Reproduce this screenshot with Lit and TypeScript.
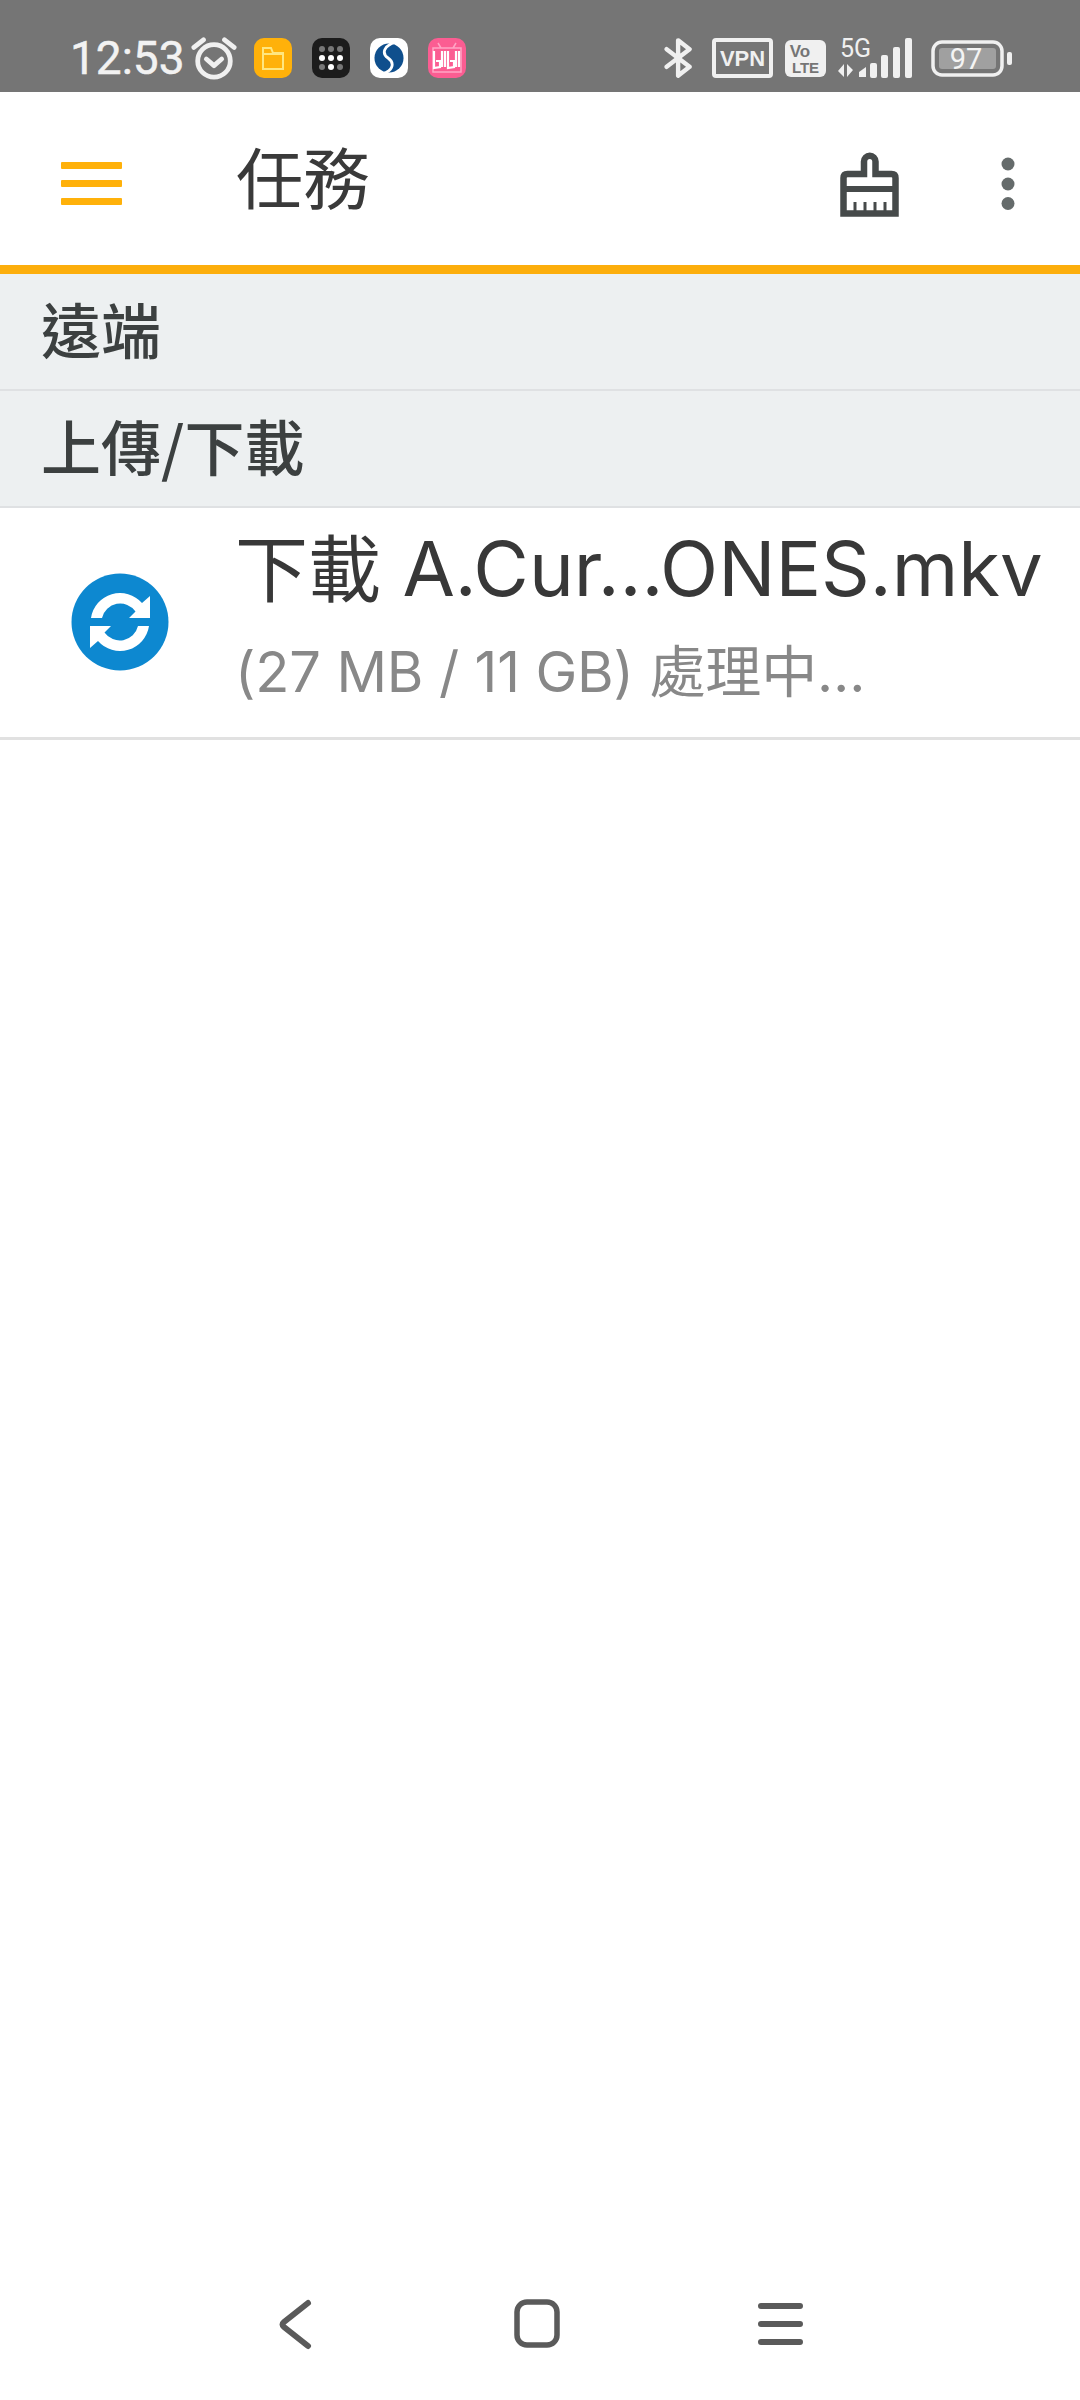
import { LitElement, html, css, svg } from "lit";
import { customElement } from "lit/decorators.js";

@customElement("app-root")
export class AppRoot extends LitElement {
  static styles = css`
    :host { display: block; width: 1080px; height: 2400px; background: #fff; font-family: Inter, "Noto Sans CJK TC", sans-serif; overflow: hidden; }
    .page { display: flex; flex-direction: column; height: 2400px; }
    .status { height: 92px; background: #757575; display: flex; align-items: center; padding: 24px 0 0 70px; box-sizing: border-box; color: #f2f2f2; flex: none; }
    .time { font-size: 46px; line-height: 46px; width: 121px; font-family: Roboto, "Noto Sans", sans-serif; flex: none; -webkit-text-stroke: 0.5px #f2f2f2; }
    .status svg { display: block; flex: none; }
    .app { width: 38px; height: 40px; border-radius: 10px; margin-right: 20px; display: flex; align-items: center; justify-content: center; flex: none; }
    .alarm { margin-right: 17px; }
    .app.last { margin-right: 0; }
    .bt { margin-left: 198px; }
    .vpn { margin-left: 18px; }
    .volte { margin-left: 12px; }
    .signal { margin-left: 11px; }
    .battery { margin-left: 17px; }
    .toolbar { height: 173px; display: flex; align-items: center; flex: none; }
    .menu { margin-left: 61px; width: 61px; display: flex; flex-direction: column; gap: 11px; margin-top: 10px; flex: none; }
    .menu i { display: block; height: 7px; background: #ffb10a; border-radius: 1px; }
    .title { margin-left: 114px; font-size: 67px; line-height: 1; color: #3a3a3a; font-family: "Noto Sans CJK TC", sans-serif; flex: 1; margin-top: -8px; }
    .broom { margin-right: 102px; margin-top: 12px; }
    .dots { margin-right: 65px; margin-top: 11px; }
    .rule { height: 9px; background: #fcae0c; flex: none; }
    .sec { height: 107px; padding-bottom: 8px; background: #edf0f1; border-bottom: 2px solid #dfe1e3; display: flex; align-items: center; padding-left: 41px; font-size: 60px; color: #3c4040; flex: none; font-weight: 500; font-family: "Noto Sans CJK TC", sans-serif; }
    .row { height: 229px; border-bottom: 3px solid #e1e1e1; display: flex; flex: none; align-items: center; }
    .ico { margin-left: 71px; flex: none; margin-top: -1px; }
    .text { margin-left: 66px; padding-bottom: 12px; display: flex; flex-direction: column; white-space: nowrap; }
    .t1 { font-size: 76px; line-height: 84px; color: #383838; }
    .t1 span { font-size: 73px; }
    .t2 { font-size: 56px; line-height: 72px; color: #888; margin-top: 24px; letter-spacing: -0.15px; }
    .nav { margin-top: auto; height: 130px; flex: none; }
  `;

  render() {
    const c = "#f0f0f0";
    return html`<div class="page">
      <div class="status">
        <span class="time">12:53</span>
        <svg class="alarm" width="46" height="46" viewBox="0 0 48 46">
          <circle cx="24" cy="26" r="17" fill="none" stroke=${c} stroke-width="5"/>
          <path d="M16 24l8 7 8-7" fill="none" stroke=${c} stroke-width="5" stroke-linecap="round" stroke-linejoin="round"/>
          <path d="M3 12L13 4M45 12L35 4" stroke=${c} stroke-width="5" stroke-linecap="round"/>
        </svg>
        <div class="app" style="background:#ffb10a">
          <svg width="24" height="26" viewBox="0 0 24 26"><path d="M2 24V3h8l2 5h10v16z M2 9h20" fill="none" stroke="#ffe680" stroke-width="2"/></svg>
        </div>
        <div class="app" style="background:#1c1c1c">
          <svg width="24" height="24" viewBox="0 0 24 24">
            ${[3, 12, 21].flatMap((y, r) => [3, 12, 21].map((x, i) => svg`<circle cx=${x} cy=${y} r="3" fill=${r === 1 || (r === 2 && i === 1) ? "#fff" : "#777"}/>`))}
          </svg>
        </div>
        <div class="app" style="background:#fff">
          <svg width="32" height="30" viewBox="0 0 32 32"><circle cx="16" cy="16" r="15.500" fill="#0f4f8d"/><path d="M23 -1C10 3 8 11 15 16c7 5 6 13-6 17" fill="none" stroke="#fff" stroke-width="3"/></svg>
        </div>
        <div class="app last" style="background:#fb5d92">
          <svg width="34" height="34" viewBox="0 0 34 34"><path d="M3 7h28v24H3zM11 7L8 2M23 7l3-5" fill="none" stroke="#ffa5c5" stroke-width="1.500"/><path d="M4 10v17l6-1v-6H6M12 10v16M15 10v16M18 10v17l6-1v-6h-4M26 10v16M29 10v16" fill="none" stroke="#fff" stroke-width="2.200"/></svg>
        </div>
        <svg class="bt" width="30" height="46" viewBox="0 0 34 46">
          <path d="M3 13l26 20-13 10V3l13 10L3 33" fill="none" stroke=${c} stroke-width="5" stroke-linejoin="round" stroke-linecap="round"/>
        </svg>
        <svg class="vpn" width="61" height="40" viewBox="0 0 61 40">
          <rect x="2" y="2" width="57" height="36" rx="2" fill="none" stroke=${c} stroke-width="4"/>
          <text x="30.5" y="28" text-anchor="middle" font-family="Liberation Sans" font-weight="700" font-size="22" fill=${c}>VPN</text>
        </svg>
        <svg class="volte" width="41" height="37" viewBox="0 0 41 37">
          <rect width="41" height="37" rx="6" fill=${c}/>
          <text x="15" y="17" text-anchor="middle" font-family="Liberation Sans" font-weight="700" font-size="17" fill="#757575">Vo</text>
          <text x="20.5" y="33" text-anchor="middle" font-family="Liberation Sans" font-weight="700" font-size="15" fill="#757575">LTE</text>
        </svg>
        <svg class="signal" width="77" height="50" viewBox="0 -4 77 50">
          <text x="3" y="20" font-family="Roboto" font-size="25" fill=${c}>5G</text>
          <path d="M7 27v13l-6-6zM10 40V27l6 6z" fill=${c}/>
          <path d="M22 40v-5l7-5v10z" fill=${c}/>
          <rect x="33" y="26" width="7" height="15" rx="2" fill=${c}/>
          <rect x="44" y="18" width="7" height="23" rx="2" fill=${c}/>
          <rect x="56" y="10" width="7" height="31" rx="2" fill=${c}/>
          <rect x="68" y="1" width="7" height="40" rx="2" fill=${c}/>
        </svg>
        <svg class="battery" width="81" height="37" viewBox="0 0 81 37">
          <rect x="2" y="2" width="69" height="33" rx="9" fill="none" stroke=${c} stroke-width="3.5"/>
          <rect x="8" y="8" width="57" height="21" rx="3" fill="#a0a0a0"/>
          <rect x="76" y="12" width="5" height="13" rx="2" fill=${c}/>
          <text x="35" y="29" text-anchor="middle" font-family="Roboto" font-size="29" fill="#f4f4f4">97</text>
        </svg>
      </div>
      <div class="toolbar">
        <div class="menu"><i></i><i></i><i></i></div>
        <div class="title">任務</div>
        <svg class="broom" width="59" height="65" viewBox="0 0 59 65">
          <path d="M3.5 61.5V26q0-4 4-4H24V9.500a5.750 5.750 0 0 1 11.500 0V22h16q4 0 4 4V61.500z" fill="none" stroke="#464a4a" stroke-width="6.5"/>
          <path d="M3.500 37h52" stroke="#464a4a" stroke-width="6"/>
          <path d="M15 60V50M25 60V50M35 60V50M45 60V50" stroke="#464a4a" stroke-width="3"/>
        </svg>
        <svg class="dots" width="14" height="54" viewBox="0 0 14 54">
          <circle cx="7" cy="7" r="6.5" fill="#656b6b"/><circle cx="7" cy="27" r="6.5" fill="#656b6b"/><circle cx="7" cy="46.5" r="6.5" fill="#656b6b"/>
        </svg>
      </div>
      <div class="rule"></div>
      <div class="sec">遠端</div>
      <div class="sec">上傳/下載</div>
      <div class="row">
        <svg class="ico" width="98" height="98" viewBox="0 0 98 98">
          <circle cx="49" cy="49" r="48.5" fill="#0d88d0"/>
          <path d="M20 44.900A29.300 29.300 0 0 1 71 30L79 23V44.900H58L64.500 38.500A18.700 18.700 0 0 0 31 44.900Z" fill="#fff"/>
          <path d="M78 53.100A29.300 29.300 0 0 1 27 68L19 75V53.100H40L33.500 59.500A18.700 18.700 0 0 0 67 53.100Z" fill="#fff"/>
        </svg>
        <div class="text">
          <div class="t1"><span>下載</span> A.Cur…ONES.mkv</div>
          <div class="t2">(27 MB / 11 GB) 處理中…</div>
        </div>
      </div>
      <div class="nav">
        <svg width="1080" height="130" viewBox="0 0 1080 130">
          <path d="M308 33L284 52Q281 54.500 284 57L308 76" fill="none" stroke="#5a5a5a" stroke-width="6" stroke-linecap="round"/>
          <rect x="517" y="32" width="40" height="43" rx="10" fill="none" stroke="#5a5a5a" stroke-width="5.5"/>
          <path d="M761 36h39M761 54h39M761 72h39" stroke="#5a5a5a" stroke-width="6" stroke-linecap="round"/>
        </svg>
      </div>
    </div>`;
  }
}
